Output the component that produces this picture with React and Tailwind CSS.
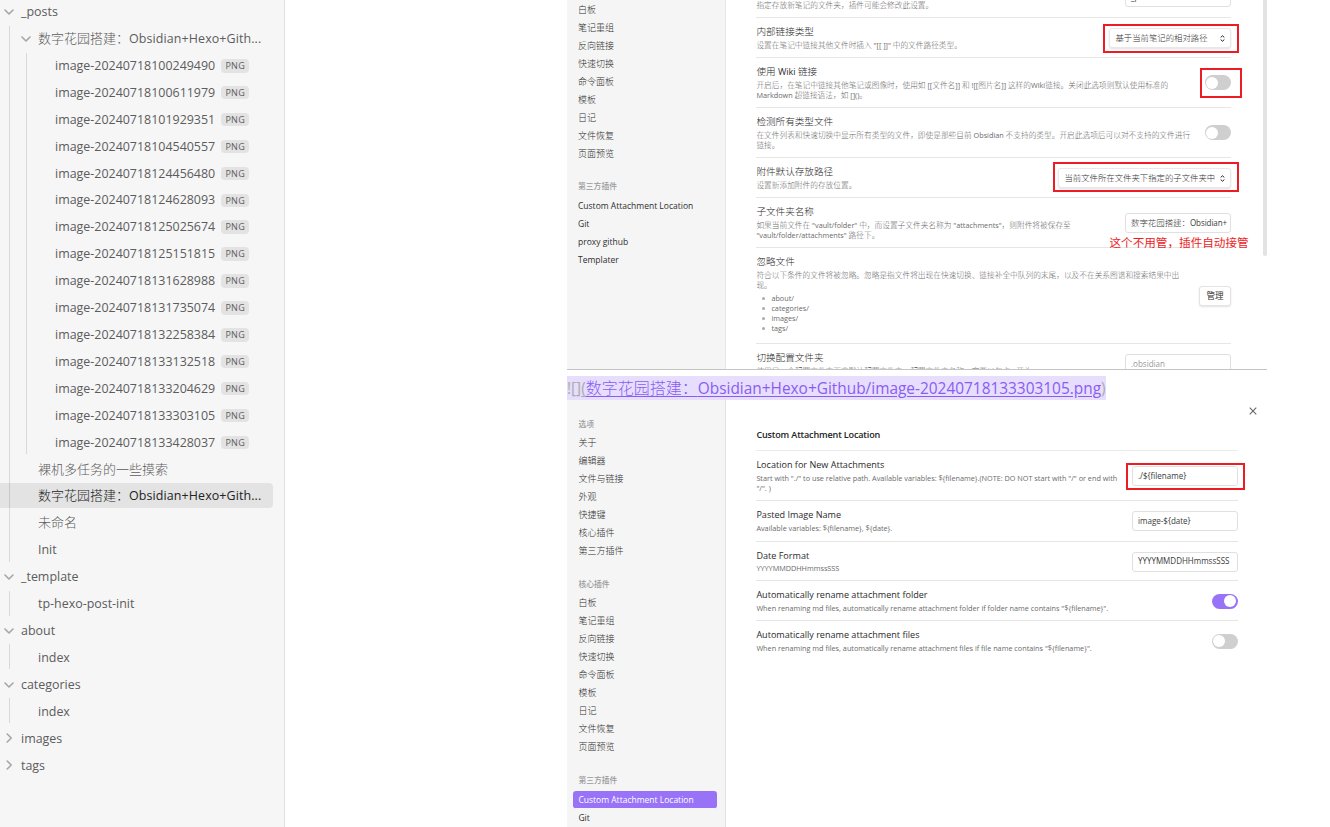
import React from "react";

const CJK = /([\u3000-\u9fff\uff00-\uffef]+)/;

// Mixed-script text: Chinese runs are set light at full size, Latin runs slightly smaller.
function T({ children, cjk = "font-light", latin = "text-[0.945em]" }) {
  return children
    .split(CJK)
    .filter(Boolean)
    .map((run, i) =>
      <span key={i} className={CJK.test(run) ? cjk : latin}>{run}</span>
    );
}

const TREE = "text-[0.957em]";
const TREE_WIDE = "text-[0.957em] tracking-[0.11px]";
const LINK = "text-[0.963em] tracking-[0.01px]";

function Chevron({ open }) {
  return (
    <svg width="10" height="10" viewBox="0 0 10 10" fill="none" stroke="#a6a6a6" strokeWidth="1.6" strokeLinecap="round" strokeLinejoin="round" className="shrink-0">
      <path d={open ? "M1 3 5 7 9 3" : "M3.2 1 7.2 5 3.2 9"} />
    </svg>
  );
}

function Folder({ name, open, children }) {
  return (
    <div>
      <div className="mb-[1.92px] flex h-[25px] items-center gap-[7px] pt-[1.5px]">
        <Chevron open={open} />
        <span className="whitespace-nowrap"><T latin={name.includes("+") ? TREE_WIDE : TREE}>{name}</T></span>
      </div>
      {children && <div className="ml-[5px] border-l border-[#d9d9d9] pl-[11px]">{children}</div>}
    </div>
  );
}

function File({ name, tag, active }) {
  if (active) {
    return (
      <div className="mb-[1.92px] ml-[-21px] flex h-[25px] w-[273px] items-center rounded-r-[4px] bg-black/[0.075] pt-[1.5px] pl-[38px] whitespace-nowrap text-[#222]">
        <span><T latin={TREE_WIDE}>{name}</T></span>
      </div>
    );
  }
  return (
    <div className="mb-[1.92px] flex h-[25px] items-center pt-[1.5px] pl-[17px] whitespace-nowrap">
      <span><T latin={TREE}>{name}</T></span>
      {tag && (
        <span className="ml-[6px] flex h-[13.5px] w-7 items-center justify-center rounded-[4px] bg-[#e3e3e3] text-[9px] font-medium tracking-[0.3px] text-[#5c5c5c]">{tag}</span>
      )}
    </div>
  );
}

const images = [
  "100249490", "100611979", "101929351", "104540557", "124456480", "124628093", "125025674", "125151815",
  "131628988", "131735074", "132258384", "133132518", "133204629", "133303105", "133428037",
];

function FileTree() {
  return (
    <aside className="h-full w-[285px] shrink-0 overflow-hidden border-r border-[#e0e0e0] bg-[#f6f6f6] pl-1 text-[13px] text-[#5c5c5c]">
      <div className="-mt-[1.3px]">
        <Folder name="_posts" open>
          <Folder name="数字花园搭建：Obsidian+Hexo+Gith..." open>
            {images.map((id) => (
              <File key={id} name={"image-20240718" + id} tag="PNG" />
            ))}
          </Folder>
          <File name="裸机多任务的一些摸索" />
          <File name="数字花园搭建：Obsidian+Hexo+Gith..." active />
          <File name="未命名" />
          <File name="Init" />
        </Folder>
        <Folder name="_template" open><File name="tp-hexo-post-init" /></Folder>
        <Folder name="about" open><File name="index" /></Folder>
        <Folder name="categories" open><File name="index" /></Folder>
        <Folder name="images" />
        <Folder name="tags" />
      </div>
    </aside>
  );
}

function Nav({ items, active }) {
  return (
    <div className="text-[9px] leading-[18.05px] text-[#2e2e2e]">
      {items.map((name) => (
        <div
          key={name}
          className={
            name === active
              ? "-ml-[5px] h-[18.05px] w-[144px] rounded-[3px] border-b border-[#f5f5f5] bg-[#9873f7] pl-[5px] font-medium text-white"
              : "h-[18.05px]"
          }
        >
          <T>{name}</T>
        </div>
      ))}
    </div>
  );
}

function NavHeading({ children }) {
  return <div className="h-[18px] text-[7.8px] leading-[17px] font-medium text-[#9a9a9a]">{children}</div>;
}

const core = ["白板", "笔记重组", "反向链接", "快速切换", "命令面板", "模板", "日记", "文件恢复", "页面预览"];

function Setting({ title, lines = [], className, controlClass = "", children, list }) {
  return (
    <div className={"flex justify-between border-b border-[#e6e6e6] pt-[7px] " + className}>
      <div className="whitespace-nowrap">
        <div className="text-[9.6px] leading-[13px] text-[#2a2a2a]"><T>{title}</T></div>
        <div className="mt-[1.5px] text-[7.7px] leading-[10px] text-[#6a6a6a]">
          {lines.map((l) => <div key={l}><T>{l}</T></div>)}
          {list && (
            <ul className="mt-[3.3px] pl-[15px]">
              {list.map((l) => (
                <li key={l} className="relative leading-[10.1px] before:absolute before:-left-[9.5px] before:top-[4px] before:size-[3px] before:rounded-full before:bg-[#aaa]"><T>{l}</T></li>
              ))}
            </ul>
          )}
        </div>
      </div>
      <div className={"shrink-0 " + controlClass}>{children}</div>
    </div>
  );
}

function RedBox({ className }) {
  return <div className={"absolute border-2 border-[#ed1c24] " + className} />;
}

function Input({ children, className = "text-[#3a3a3a]" }) {
  return (
    <div className={"flex h-[20px] w-[106px] items-center rounded-[3px] border border-[#e0e0e0] bg-white pl-[5px] text-[8.5px] whitespace-nowrap " + className}>
      <span><T>{children}</T></span>
    </div>
  );
}

function Select({ children, className }) {
  return (
    <div className={"flex h-[20px] items-center justify-between rounded-[3px] border border-[#e8e8e8] bg-white pr-[5px] pl-[5.5px] text-[8.4px] text-[#333] shadow-[0_1px_2px_rgba(0,0,0,0.12)] " + className}>
      <span className="whitespace-nowrap"><T>{children}</T></span>
      <svg width="5" height="7" viewBox="0 0 5 7" fill="none" stroke="#222" strokeWidth="1">
        <path d="M0.7 2.4 2.5 0.8 4.3 2.4M0.7 4.6 2.5 6.2 4.3 4.6" />
      </svg>
    </div>
  );
}

function Toggle({ on }) {
  return (
    <div className={"flex h-[15px] w-[26px] items-center rounded-full px-[1.5px] " + (on ? "justify-end bg-[#9873f7]" : "bg-[#cfcfcf]")}>
      <div className="size-[12px] rounded-full bg-white" />
    </div>
  );
}

function FilesAndLinks() {
  return (
    <section className="flex h-[370px] shrink-0 overflow-hidden border-b border-[#c4c4c4]">
      <div className="w-[159px] shrink-0 border-r border-[#e6e6e6] bg-[#f5f5f5] pt-[0.5px] pl-[11px]">
        <Nav items={core} />
        <div className="mt-[15.5px]" />
        <NavHeading>第三方插件</NavHeading>
        <div className="mt-[0.5px]" />
        <Nav items={["Custom Attachment Location", "Git", "proxy github", "Templater"]} />
      </div>
      <div className="ml-[30.4px] w-[474.6px] shrink-0">
        <Setting className="-mt-[22px] h-[40px]" title="新建笔记的存放位置" lines={["指定存放新笔记的文件夹，插件可能会修改此设置。"]} controlClass="pt-[2px]">
          <Input>_posts</Input>
        </Setting>
        <Setting className="h-[40px]" title="内部链接类型" lines={['设置在笔记中链接其他文件时插入 "[[ ]]" 中的文件路径类型。']} controlClass="pt-[3px]">
          <div className="relative">
            <Select className="w-[122px]">基于当前笔记的相对路径</Select>
            <RedBox className="-top-[4px] -left-[6px] h-[29px] w-[136px]" />
          </div>
        </Setting>
        <Setting className="h-[50px]" title="使用 Wiki 链接" lines={["开启后，在笔记中链接其他笔记或图像时，使用如 [[文件名]] 和 ![[图片名]] 这样的Wiki链接。关闭此选项则默认使用标准的", "Markdown 超链接语法，如 []()。"]} controlClass="pt-[10px]">
          <div className="relative">
            <Toggle />
            <RedBox className="-top-[7px] -left-[5px] h-[30px] w-[42px]" />
          </div>
        </Setting>
        <Setting className="h-[50px]" title="检测所有类型文件" lines={["在文件列表和快速切换中显示所有类型的文件，即使是那些目前 Obsidian 不支持的类型。开启此选项后可以对不支持的文件进行", "链接。"]} controlClass="pt-[10px]">
          <Toggle />
        </Setting>
        <Setting className="h-[40px]" title="附件默认存放路径" lines={["设置新添加附件的存放位置。"]} controlClass="pt-[3px]">
          <div className="relative">
            <Select className="w-[173px]">当前文件所在文件夹下指定的子文件夹中</Select>
            <RedBox className="-top-[6px] -left-[5px] h-[30px] w-[186px]" />
          </div>
        </Setting>
        <Setting className="h-[50px]" title="子文件夹名称" lines={['如果当前文件在 "vault/folder" 中，而设置子文件夹名称为 "attachments"，则附件将被保存至', '"vault/folder/attachments" 路径下。']} controlClass="pt-[8px]">
          <div className="relative">
            <Input className="tracking-[-0.08px] text-[#3a3a3a]">数字花园搭建：Obsidian+</Input>
            <div className="absolute top-[22px] -left-[15.5px] text-[11.6px] leading-4 whitespace-nowrap text-[#ed1c24]">这个不用管，插件自动接管</div>
          </div>
        </Setting>
        <Setting className="h-[96px]" title="忽略文件" lines={["符合以下条件的文件将被忽略。忽略是指文件将出现在快速切换、链接补全中队列的末尾，以及不在关系图谱和搜索结果中出", "现。"]} list={["about/", "categories/", "images/", "tags/"]} controlClass="pt-[31px]">
          <div className="flex h-[20px] w-[32px] items-center justify-center rounded-[3px] border border-[#e4e4e4] bg-white text-[8.6px] text-[#333] shadow-[0_1px_2px_rgba(0,0,0,0.12)]">管理</div>
        </Setting>
        <Setting className="h-[50px]" title="切换配置文件夹" lines={["使用另一个配置文件夹而非默认配置文件夹。配置文件夹名称，它要以句点(.)开头。"]} controlClass="pt-[3px]">
          <Input className="text-[#999]">.obsidian</Input>
        </Setting>
      </div>
      <div className="ml-auto h-[256px] w-[4px] rounded-b-full bg-[#e3e3e3]" />
    </section>
  );
}

function AttachmentLocation() {
  return (
    <section className="flex min-h-0 flex-1 overflow-hidden">
      <div className="w-[159px] shrink-0 border-r border-[#e2e2e2] bg-[#f5f5f5] pt-[15.5px] pl-[11.4px]">
        <NavHeading>选项</NavHeading>
        <Nav items={["关于", "编辑器", "文件与链接", "外观", "快捷键", "核心插件", "第三方插件"]} />
        <div className="mt-[16px]" />
        <NavHeading>核心插件</NavHeading>
        <Nav items={core} />
        <div className="mt-[15.5px]" />
        <NavHeading>第三方插件</NavHeading>
        <div className="mt-px" />
        <Nav items={["Custom Attachment Location", "Git"]} active="Custom Attachment Location" />
      </div>
      <div className="ml-[30.4px] w-[481.6px] shrink-0">
        <h2 className="h-[51px] border-b border-[#ececec] pt-[27px] text-[9.6px] leading-4 font-semibold tracking-[-0.16px] text-[#222]"><T>Custom Attachment Location</T></h2>
        <Setting className="h-[50px]" title="Location for New Attachments" lines={['Start with "./" to use relative path. Available variables: ${filename}.(NOTE: DO NOT start with "/" or end with', '"/". )']} controlClass="pt-[8px]">
          <div className="relative">
            <Input>{"./${filename}"}</Input>
            <RedBox className="-top-[3px] -left-[6px] h-[27px] w-[119px]" />
          </div>
        </Setting>
        <Setting className="h-[40.5px]" title="Pasted Image Name" lines={["Available variables: ${filename}, ${date}."]} controlClass="pt-[3px]">
          <Input>{"image-${date}"}</Input>
        </Setting>
        <Setting className="h-[39.5px]" title="Date Format" lines={["YYYYMMDDHHmmssSSS"]} controlClass="pt-[3px]">
          <Input>YYYYMMDDHHmmssSSS</Input>
        </Setting>
        <Setting className="h-[40px]" title="Automatically rename attachment folder" lines={['When renaming md files, automatically rename attachment folder if folder name contains "${filename}".']} controlClass="pt-[5.5px]">
          <Toggle on />
        </Setting>
        <Setting className="h-[40px] border-b-transparent" title="Automatically rename attachment files" lines={['When renaming md files, automatically rename attachment files if file name contains "${filename}".']} controlClass="pt-[5.5px]">
          <Toggle />
        </Setting>
      </div>
      <svg width="8" height="8" viewBox="0 0 8 8" stroke="#666" strokeWidth="1.1" className="mt-[6.5px] mr-[10px] ml-auto">
        <path d="M0.7 0.7 7.3 7.3M7.3 0.7 0.7 7.3" />
      </svg>
    </section>
  );
}

export default function App() {
  return (
    <div className="flex h-[827px] w-[1330px] overflow-hidden bg-white font-['Open_Sans','Noto_Sans_CJK_SC',sans-serif]">
      <FileTree />
      <main className="ml-[282px] flex h-full w-[700px] flex-col">
        <FilesAndLinks />
        <div className="mt-[6px] h-[24px] shrink-0 text-[16px] leading-[24px] whitespace-nowrap">
          <span className="inline-block h-[24px] bg-[#e6defc] text-[#8a5cf5]">
            <span className="text-[#ababab]"><T latin={LINK}>![]</T></span>
            <span className="text-[#ababab] underline underline-offset-2"><T latin={LINK}>(</T></span>
            <span className="underline underline-offset-2"><T latin={LINK}>数字花园搭建：Obsidian+Hexo+Github/image-20240718133303105.png</T></span>
            <span className="text-[#ababab]"><T latin={LINK}>)</T></span>
          </span>
        </div>
        <AttachmentLocation />
      </main>
    </div>
  );
}
